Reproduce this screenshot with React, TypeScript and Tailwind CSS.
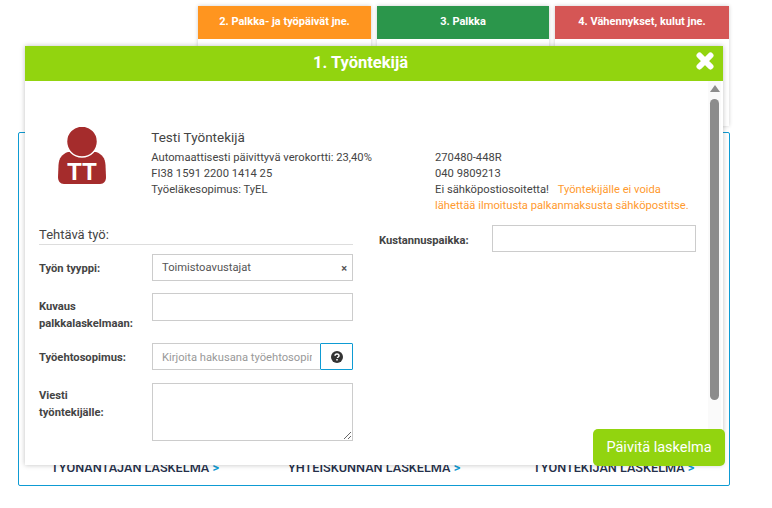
const font = { fontFamily: 'Roboto, sans-serif' };

const tabs = [
  { title: '2. Palkka- ja työpäivät jne.', color: 'bg-[#ff951f]', width: 'w-[173px]' },
  { title: '3. Palkka', color: 'bg-[#2b964b]', width: 'w-[172px]' },
  { title: '4. Vähennykset, kulut jne.', color: 'bg-[#d55655]', width: 'w-[174px]' },
];

const summaryLinks = ['TYÖNANTAJAN LASKELMA', 'YHTEISKUNNAN LASKELMA', 'TYÖNTEKIJÄN LASKELMA'];

function Label({ children, className = '' }: { children: React.ReactNode; className?: string }) {
  return <label className={`w-[113px] shrink-0 text-[11.2px] leading-[17px] font-bold text-[#444] ${className}`}>{children}</label>;
}

function PersonIcon() {
  return (
    <div className="relative w-[48px] h-[58px] shrink-0">
      <svg viewBox="0 0 48 58" className="w-[48px] h-[58px]">
        <path d="M10 25 L38 25 C44 27 47 31 47.5 38 L48 50 C48 54 46 57 42 57 L6 57 C2 57 0 54 0 50 L0.5 38 C1 31 4 27 10 25 Z" fill="#a52c2c" />
        <circle cx="24" cy="14.5" r="15.5" fill="#a52c2c" stroke="#fff" strokeWidth="1.5" />
      </svg>
      <span className="absolute left-0 right-0 top-[32px] text-center text-[24px] leading-[26px] font-bold text-white">TT</span>
    </div>
  );
}

export default function App() {
  return (
    <div className="relative w-[772px] h-[508px] overflow-hidden bg-white" style={font}>
      {/* Page behind the dialog */}
      <div className="pt-[6px]">
        <div className="ml-[198px] flex gap-[6px]">
          {tabs.map((tab) => (
            <div key={tab.title} className={`${tab.width} h-[120px] bg-white shadow-[0_0_4px_rgba(0,0,0,0.2)]`}>
              <div className={`${tab.color} h-[33px] flex items-center justify-center text-white text-[11px] font-bold`}>{tab.title}</div>
            </div>
          ))}
        </div>
        <div className="ml-[18px] mt-[6px] w-[712px] h-[354px] border border-[#0e9bd3] rounded-[2px] flex items-end pb-[9px]">
          <div className="flex w-full">
            {summaryLinks.map((link, i) => (
              <div key={link} className={`text-[12.7px] leading-[16px] font-medium text-[#25304a] whitespace-nowrap ${i === 0 ? 'ml-[32px] w-[237px]' : i === 1 ? 'w-[245px]' : ''}`}>
                {link} <span className="text-[#0e9bd3] font-bold">&gt;</span>
              </div>
            ))}
          </div>
        </div>
      </div>

      {/* Dialog */}
      <div className="absolute left-[25px] top-[46px] w-[698px] h-[419px] bg-white shadow-[0_0_5px_rgba(0,0,0,0.25)] flex flex-col">
        <div className="relative h-[35px] shrink-0 bg-[#92d40f] flex items-center justify-center pr-[27px] text-white text-[16.5px] font-bold">
          1. Työntekijä
          <svg viewBox="0 0 18 18" className="absolute left-[671px] top-[6px] w-[18px] h-[18px]">
            <path d="M3.5 3.5 L14.5 14.5 M14.5 3.5 L3.5 14.5" fill="none" stroke="#fff" strokeWidth="6" strokeLinecap="round" />
          </svg>
        </div>
        <div className="flex-1 flex min-h-0">
          <div className="flex-1 min-w-0 pl-[14px] pr-[13px] pt-[46px]">
            <div className="flex">
              <div className="ml-[19px] w-[93px]"><PersonIcon /></div>
              <div className="w-[284px] pl-[1px]">
                <div className="text-[13.5px] leading-[20px] text-[#444] mb-[3px]">Testi Työntekijä</div>
                <div className="text-[11.2px] leading-[16px] text-[#444]">
                  <div>Automaattisesti päivittyvä verokortti: 23,40%</div>
                  <div>FI38 1591 2200 1414 25</div>
                  <div>Työeläkesopimus: TyEL</div>
                </div>
              </div>
              <div className="text-[11.2px] leading-[16px] text-[#444] mt-[23px] ml-[3px] w-[262px]">
                <div>270480-448R</div>
                <div>040 9809213</div>
                <div>
                  Ei sähköpostiosoitetta!{' '}
                  <span className="ml-[6px] text-[#ff9a2e]">Työntekijälle ei voida lähettää ilmoitusta palkanmaksusta sähköpostitse.</span>
                </div>
              </div>
            </div>

            <div className="flex mt-[11px]">
              <div className="w-[314px] pt-[1px]">
                <div className="text-[13px] leading-[18px] text-[#444] border-b border-[#ddd]">Tehtävä työ:</div>
                <div className="flex items-center mt-[9px]">
                  <Label className="pt-[2px]">Työn tyyppi:</Label>
                  <div className="relative w-[201px] h-[27px] border border-[#ccc] flex items-center pl-[9px] pt-[2px] text-[11.2px] text-[#555]">
                    Toimistoavustajat
                    <span className="absolute right-[5px] top-[6px] text-[11px] font-bold text-[#555]">×</span>
                  </div>
                </div>
                <div className="flex mt-[12px]">
                  <Label className="pt-[5px]">Kuvaus<br />palkkalaskelmaan:</Label>
                  <input className="w-[201px] h-[28px] border border-[#ccc] outline-none" />
                </div>
                <div className="flex items-center mt-[11px]">
                  <Label className="pt-[2px]">Työehtosopimus:</Label>
                  <div className="flex w-[201px] h-[27px]">
                    <input
                      placeholder="Kirjoita hakusana työehtosopimukselle"
                      className="w-[168px] min-w-0 h-full border border-r-0 border-[#ccc] pl-[9px] pr-[8px] pt-[2px] text-[11.2px] outline-none placeholder:text-[#999]"
                    />
                    <button className="w-[33px] h-full border border-[#0e9bd3] rounded-[1px] flex items-center justify-center">
                      <svg viewBox="0 0 24 24" className="w-[12px] h-[12px]">
                        <circle cx="12" cy="12" r="12" fill="#333" />
                        <path d="M8 9.5 C8 7 10 6 12 6 C14.5 6 16 7.5 16 9.5 C16 12 13 12 13 14" fill="none" stroke="#fff" strokeWidth="3" />
                        <rect x="10.5" y="16" width="3" height="3" fill="#fff" />
                      </svg>
                    </button>
                  </div>
                </div>
                <div className="flex mt-[13px]">
                  <Label className="pt-[4px]">Viesti<br />työntekijälle:</Label>
                  <textarea className="w-[201px] h-[58px] border border-[#ccc] outline-none" />
                </div>
              </div>
              <div className="ml-[26px] flex items-center self-start">
                <Label className="pt-[3px]">Kustannuspaikka:</Label>
                <input className="w-[204px] h-[27px] border border-[#ccc] outline-none" />
              </div>
            </div>
          </div>

          {/* Scrollbar */}
          <div className="w-[13px] mr-[2px] bg-[#fafafa] flex flex-col items-center pt-[4px]">
            <div className="w-0 h-0 border-l-[5px] border-r-[5px] border-b-[7px] border-l-transparent border-r-transparent border-b-[#8c8c8c]" />
            <div className="mt-[7px] w-[9px] h-[301px] rounded-[5px] bg-[#8c8c8c]" />
          </div>
        </div>
      </div>

      <button className="absolute left-[593px] top-[429px] w-[132px] h-[37px] rounded-[5px] bg-[#92d40f] text-white text-[14.5px]">
        Päivitä laskelma
      </button>
    </div>
  );
}
